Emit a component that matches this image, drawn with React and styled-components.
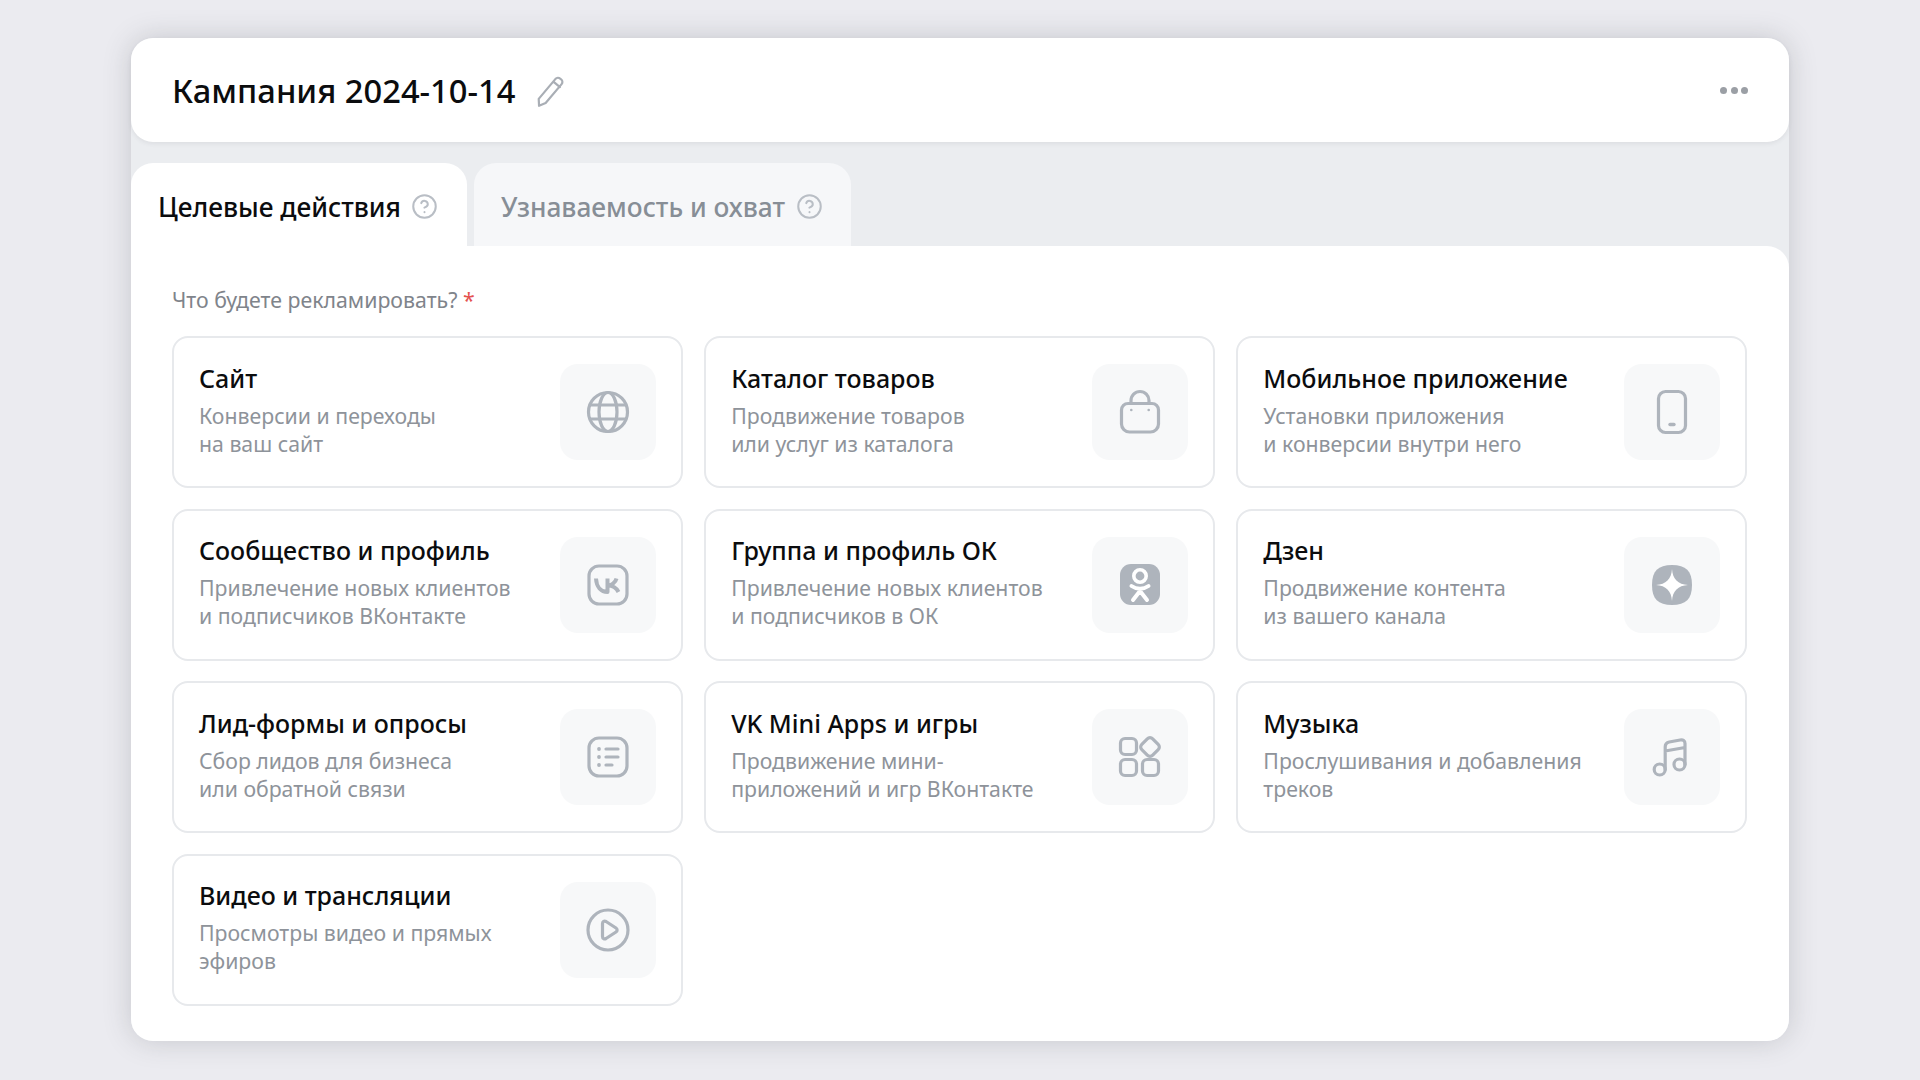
import React from "react";
import styled, { createGlobalStyle } from "styled-components";
import { CircleHelp } from "lucide-react";

const GlobalStyle = createGlobalStyle`
  html, body {
    margin: 0;
    padding: 0;
    background: #ebebf0;
  }
  * {
    box-sizing: border-box;
  }
  body {
    font-family: "Noto Sans", "Open Sans", sans-serif;
    color: #0b0c0e;
  }
`;

const Svg = ({ children, size = 48 }) => (
  <svg width={size} height={size} viewBox="0 0 48 48" fill="none" stroke="#aeb4bc" strokeWidth="3.2" strokeLinecap="round" strokeLinejoin="round">
    {children}
  </svg>
);

const GlobeIcon = () => (
  <Svg>
    <circle cx="24" cy="24" r="19.5" />
    <ellipse cx="24" cy="24" rx="9" ry="19.5" />
    <path d="M6.5 17h35M6.5 31h35" />
  </Svg>
);

const BagIcon = () => (
  <Svg>
    <path d="M12 15.500h24a6.500 6.500 0 0 1 6.500 6.500v14a8 8 0 0 1-8 8h-21a8 8 0 0 1-8-8V22a6.500 6.500 0 0 1 6.500-6.500Z" />
    <path d="M15 15.500v-3a9 9 0 0 1 18 0v3" />
    <circle cx="15.300" cy="22" r="1.300" fill="#aeb4bc" stroke="none" />
    <circle cx="32.700" cy="22" r="1.300" fill="#aeb4bc" stroke="none" />
  </Svg>
);

const PhoneIcon = () => (
  <Svg>
    <rect x="10.5" y="3.5" width="27" height="41" rx="7" />
    <path d="M22 36.5h4" strokeWidth="3.4" />
  </Svg>
);

const VkIcon = () => (
  <Svg>
    <rect x="5" y="5" width="38" height="38" rx="10" />
    <path d="M12 17.500C12.500 26 17 31 23.500 31V17.500M23.500 24.500C27.500 24.500 31.500 21.500 32.500 17.500M23.500 24.500C28 24.500 32.500 27 34.500 31" strokeWidth="4" strokeLinecap="butt" />
  </Svg>
);

const OkIcon = () => (
  <Svg>
    <rect x="4" y="3" width="40" height="41" rx="11" fill="#aeb4bc" stroke="none" />
    <circle cx="24" cy="15" r="6.2" stroke="#fff" strokeWidth="3.6" />
    <path d="M15.5 25c5 3.6 12 3.6 17 0M24 28v3M24 30l-7 9M24 30l7 9" stroke="#fff" strokeWidth="4" />
  </Svg>
);

const ZenIcon = () => (
  <Svg>
    <path d="M24 4C38 4 44 10 44 24S38 44 24 44 4 38 4 24 10 4 24 4Z" fill="#aeb4bc" stroke="none" />
    <path d="M24 8c.6 10 6 15.400 16 16-10 .6-15.400 6-16 16-.6-10-6-15.400-16-16 10-.6 15.400-6 16-16Z" fill="#fff" stroke="none" />
  </Svg>
);

const ListIcon = () => (
  <Svg>
    <rect x="5" y="5" width="38" height="38" rx="10" />
    <circle cx="15" cy="16" r="1.9" fill="#aeb4bc" stroke="none" />
    <circle cx="15" cy="24" r="1.9" fill="#aeb4bc" stroke="none" />
    <circle cx="15" cy="32" r="1.9" fill="#aeb4bc" stroke="none" />
    <path d="M22 16h12M22 24h12M22 32h6" />
  </Svg>
);

const AppsIcon = () => (
  <Svg>
    <rect x="4.500" y="5.500" width="16" height="16" rx="4.500" />
    <rect x="4.500" y="26.500" width="16" height="16" rx="4.500" />
    <rect x="26.500" y="26.500" width="16" height="16" rx="4.500" />
    <path d="M31.300 5.800a3.800 3.800 0 0 1 5.400 0l5.500 5.500a3.800 3.800 0 0 1 0 5.400l-5.500 5.500a3.800 3.800 0 0 1-5.400 0l-5.500-5.500a3.800 3.800 0 0 1 0-5.400Z" />
  </Svg>
);

const MusicIcon = () => (
  <Svg>
    <circle cx="11.700" cy="36.500" r="5.500" />
    <circle cx="31.500" cy="31.500" r="5.500" />
    <path d="M17.200 36.500V14c0-3 1.500-4.500 4-5l11-2c3-.5 4.800.8 4.800 3.500v21M17.200 18l19.800-3.500" />
  </Svg>
);

const PlayIcon = () => (
  <Svg>
    <circle cx="24" cy="24" r="20" />
    <path d="M18.500 17.500c0-2 1.800-3 3.500-2l10 6.500c1.500 1 1.500 3 0 4l-10 6.500c-1.700 1-3.500 0-3.500-2Z" />
  </Svg>
);

const items = [
  { title: "Сайт", text: "Конверсии и переходы\nна ваш сайт", icon: <GlobeIcon /> },
  { title: "Каталог товаров", text: "Продвижение товаров\nили услуг из каталога", icon: <BagIcon /> },
  { title: "Мобильное приложение", text: "Установки приложения\nи конверсии внутри него", icon: <PhoneIcon /> },
  { title: "Сообщество и профиль", text: "Привлечение новых клиентов\nи подписчиков ВКонтакте", icon: <VkIcon /> },
  { title: "Группа и профиль ОК", text: "Привлечение новых клиентов\nи подписчиков в ОК", icon: <OkIcon /> },
  { title: "Дзен", text: "Продвижение контента\nиз вашего канала", icon: <ZenIcon /> },
  { title: "Лид-формы и опросы", text: "Сбор лидов для бизнеса\nили обратной связи", icon: <ListIcon /> },
  { title: "VK Mini Apps и игры", text: "Продвижение мини-\nприложений и игр ВКонтакте", icon: <AppsIcon /> },
  { title: "Музыка", text: "Прослушивания и добавления\nтреков", icon: <MusicIcon /> },
  { title: "Видео и трансляции", text: "Просмотры видео и прямых\nэфиров", icon: <PlayIcon /> },
];

const App = () => (
  <Page>
    <GlobalStyle />
    <Panel>
      <Header>
        <TitleRow>
          <Title>Кампания 2024-10-14</Title>
          <svg width="33" height="33" viewBox="0 0 30 30" fill="none" stroke="#a9aeb5" strokeWidth="2" strokeLinecap="round" strokeLinejoin="round">
            <path d="M20.500 3.500a3 3 0 0 1 4.200-.2l1 .8a3 3 0 0 1 .3 4.200L11.500 25.500 5.500 28l-.3-6.300ZM18.500 6l6 5" />
          </svg>
        </TitleRow>
        <Dots>
          <i />
          <i />
          <i />
        </Dots>
      </Header>
      <Tabs>
        <Tab $active>
          Целевые действия
          <CircleHelp size={27} color="#b9bec5" strokeWidth={1.8} />
        </Tab>
        <Tab>
          Узнаваемость и охват
          <CircleHelp size={27} color="#b9bec5" strokeWidth={1.8} />
        </Tab>
      </Tabs>
      <Body>
        <Label>
          Что будете рекламировать? <span>*</span>
        </Label>
        <Grid>
          {items.map((item) => (
            <Card key={item.title}>
              <CardInfo>
                <CardTitle>{item.title}</CardTitle>
                <CardText>{item.text}</CardText>
              </CardInfo>
              <IconBox>{item.icon}</IconBox>
            </Card>
          ))}
        </Grid>
      </Body>
    </Panel>
  </Page>
);

const Page = styled.div`
  min-height: 1080px;
  padding-top: 38px;
`;

const Panel = styled.div`
  width: 1658px;
  margin: 0 auto;
  background: #ebedf0;
  border-radius: 22px;
  box-shadow: 0 0 28px rgba(60, 64, 72, 0.21);
`;

const Header = styled.div`
  height: 104px;
  padding: 0 41px;
  background: #fff;
  border-radius: 22px;
  display: flex;
  align-items: center;
  justify-content: space-between;
  box-shadow: 0 2px 4px rgba(60, 64, 72, 0.08);
`;

const TitleRow = styled.div`
  display: flex;
  align-items: center;
  gap: 18px;
  margin-top: 2px;
`;

const Title = styled.h1`
  margin: 0;
  font-size: 32.700px;
  line-height: 44px;
  font-weight: 500;
`;

const Dots = styled.div`
  display: flex;
  gap: 3.500px;
  i {
    width: 7px;
    height: 7px;
    border-radius: 50%;
    background: #9b9fa5;
  }
`;

const Tabs = styled.div`
  display: flex;
  gap: 7px;
  margin-top: 21px;
`;

const Tab = styled.div`
  height: 83px;
  padding: 4px 28.500px 0 27px;
  display: flex;
  align-items: center;
  gap: 10.500px;
  font-size: 26.300px;
  font-weight: 500;
  border-radius: 22px 22px 0 0;
  background: ${({ $active }) => ($active ? "#fff" : "#f6f7f9")};
  color: ${({ $active }) => ($active ? "#0b0c0e" : "#878e96")};
`;

const Body = styled.div`
  background: #fff;
  border-radius: 0 22px 22px 22px;
  padding: 40px 42px 35px 41px;
`;

const Label = styled.div`
  font-size: 21.300px;
  line-height: 28px;
  color: #7f848b;
  margin-bottom: 22px;
  span {
    color: #e4524f;
  }
`;

const Grid = styled.div`
  display: grid;
  grid-template-columns: repeat(3, 1fr);
  gap: 20.600px 21.500px;
`;

const Card = styled.div`
  height: 152px;
  padding: 0 25px;
  border: 2px solid #e7e9ec;
  border-radius: 16px;
  display: flex;
  align-items: center;
  justify-content: space-between;
`;

const CardInfo = styled.div`
  padding-bottom: 6px;
`;

const CardTitle = styled.div`
  font-size: 25px;
  line-height: 34px;
  font-weight: 500;
  margin-bottom: 7px;
`;

const CardText = styled.div`
  font-size: 21.250px;
  line-height: 28px;
  color: #8e939a;
  white-space: pre-line;
`;

const IconBox = styled.div`
  flex: none;
  width: 96px;
  height: 96px;
  border-radius: 18px;
  background: #f7f8f9;
  display: flex;
  align-items: center;
  justify-content: center;
`;

export default App;
